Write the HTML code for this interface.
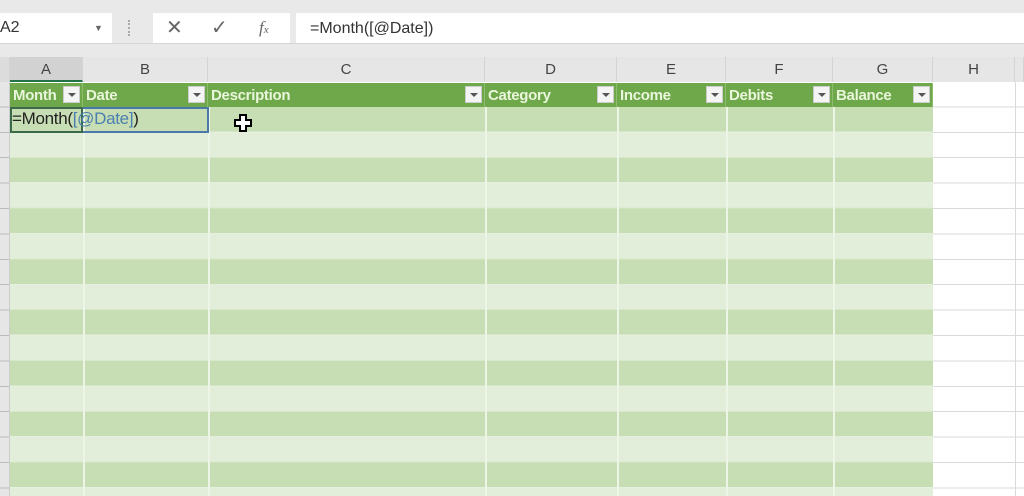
<!DOCTYPE html>
<html><head><style>
body{margin:0;width:1024px;height:496px;overflow:hidden;background:#fff;font-family:"Liberation Sans",sans-serif;position:relative}
.a{position:absolute}
.hdr{position:absolute;top:57px;height:25px;background:#e6e6e6;color:#444;font-size:15px;text-align:center;line-height:25px;border-right:1px solid #d4d4d4;box-sizing:border-box}
.th{position:absolute;top:83px;height:24px;background:#6fa84a;color:#eaf6dc;font-weight:bold;font-size:15px;letter-spacing:-0.3px;line-height:26px;padding-left:3px;box-sizing:border-box;border-right:1px solid #8fbd6e;overflow:hidden;white-space:nowrap}
.dd{position:absolute;top:3px;right:2px;width:17px;height:17px;background:#f4f4f4;border:1px solid #ccc;box-sizing:border-box}
.dd:after{content:"";position:absolute;left:4px;top:6px;border-left:4px solid transparent;border-right:4px solid transparent;border-top:4px solid #555}
</style></head><body>
<div class="a" style="left:0;top:0;width:1024px;height:57px;background:#e9e9e9"></div>
<div class="a" style="left:0;top:13px;width:112px;height:30px;background:#fff;font-size:16px;line-height:30px;color:#333">A2<span style="position:absolute;left:94px;top:0;font-size:9px;color:#666">▼</span></div>
<div class="a" style="left:128px;top:20px;width:3px;height:16px;border-left:2px dotted #aaa"></div>
<div class="a" style="left:153px;top:13px;width:137px;height:30px;background:#fff;color:#666;font-size:20px;line-height:30px">
<span style="position:absolute;left:13px">✕</span><span style="position:absolute;left:58px">✓</span><span style="position:absolute;left:106px;font-family:'Liberation Serif',serif;font-style:italic;font-size:17px">f<span style="font-size:11px">x</span></span></div>
<div class="a" style="left:296px;top:13px;width:728px;height:30px;background:#fff;font-size:16px;line-height:32px;color:#333;padding-left:14px;box-sizing:border-box">=Month([@Date])</div>
<div class="a" style="left:0;top:43px;width:1024px;height:1px;background:#d6d6d6"></div>
<div class="hdr" style="left:0;width:10px;background:#dcdcdc"></div>
<div class="hdr" style="left:10px;width:73px;background:#d2d2d2;border-bottom:2px solid #217346">A</div>
<div class="hdr" style="left:83px;width:125px">B</div>
<div class="hdr" style="left:208px;width:277px">C</div>
<div class="hdr" style="left:485px;width:132px">D</div>
<div class="hdr" style="left:617px;width:109px">E</div>
<div class="hdr" style="left:726px;width:107px">F</div>
<div class="hdr" style="left:833px;width:100px">G</div>
<div class="hdr" style="left:933px;width:82px">H</div>
<div class="hdr" style="left:1015px;width:9px"></div>
<div class="a" style="left:0;top:82px;width:10px;height:414px;background:#e6e6e6;border-right:1px solid #ccc;box-sizing:border-box;background-image:repeating-linear-gradient(#e6e6e6 0,#e6e6e6 24.4px,#bbb 24.4px,#bbb 25.4px)"></div>
<div class="a" style="left:933px;top:82px;width:91px;height:414px;background:repeating-linear-gradient(#fff 0,#fff 24.4px,#dadada 24.4px,#dadada 25.4px)"></div>
<div class="a" style="left:1015px;top:82px;width:1px;height:414px;background:#dadada"></div>
<div class="a" style="left:10px;top:107px;width:923px;height:389px;background:repeating-linear-gradient(#c7ddb3 0,#c7ddb3 24.4px,#e6f0de 24.4px,#e6f0de 25.4px,#e3eeda 25.4px,#e3eeda 49.8px,#d9e8cc 49.8px,#d9e8cc 50.8px)"></div>
<div class="a" style="left:83px;top:107px;width:2px;height:389px;background:#edf5e6"></div>
<div class="a" style="left:208px;top:107px;width:2px;height:389px;background:#edf5e6"></div>
<div class="a" style="left:485px;top:107px;width:2px;height:389px;background:#edf5e6"></div>
<div class="a" style="left:617px;top:107px;width:2px;height:389px;background:#edf5e6"></div>
<div class="a" style="left:726px;top:107px;width:2px;height:389px;background:#edf5e6"></div>
<div class="a" style="left:833px;top:107px;width:2px;height:389px;background:#edf5e6"></div>
<div class="th" style="left:10px;width:73px">Month<div class="dd"></div></div>
<div class="th" style="left:83px;width:125px">Date<div class="dd"></div></div>
<div class="th" style="left:208px;width:277px">Description<div class="dd"></div></div>
<div class="th" style="left:485px;width:132px">Category<div class="dd"></div></div>
<div class="th" style="left:617px;width:109px">Income<div class="dd"></div></div>
<div class="th" style="left:726px;width:107px">Debits<div class="dd"></div></div>
<div class="th" style="left:833px;width:100px">Balance<div class="dd"></div></div>
<div class="a" style="left:10px;top:107px;width:73px;height:26px;border:2px solid #3a6a4a;box-sizing:border-box"></div>
<div class="a" style="left:83px;top:107px;width:126px;height:26px;border:2px solid #4a78a8;border-left:none;box-sizing:border-box"></div>
<div class="a" style="left:12px;top:109px;font-size:17px;color:#222;white-space:nowrap;letter-spacing:-0.3px">=Month(<span style="color:#4a7fb0">[@Date]</span>)</div>
<svg class="a" style="left:234px;top:114px" width="18" height="18" viewBox="0 0 18 18"><path d="M6 1h6v5h5v6h-5v5H6v-5H1V6h5z" fill="#fff" stroke="#000" stroke-width="2"/></svg>
</body></html>
